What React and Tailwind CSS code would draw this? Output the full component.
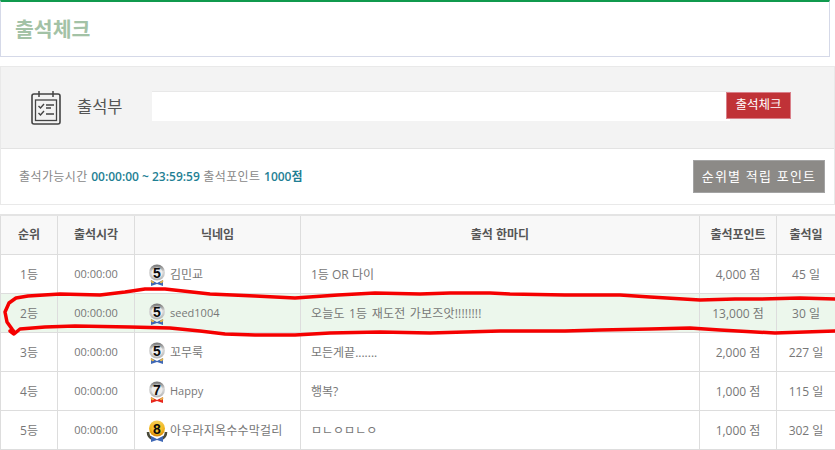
const rows = [
  { r: "1등", t: "00:00:00", lv: 5, kind: "silver", n: "김민교", nc: "text-[12px]", m: "1등 OR 다이", mc: "", p: "4,000 점", d: "45 일" },
  { r: "2등", t: "00:00:00", lv: 5, kind: "silver", n: "seed1004", nc: "text-[11px]", m: "오늘도 1등 재도전 가보즈앗!!!!!!!!", mc: "tracking-[0.2px] [word-spacing:1px]", p: "13,000 점", d: "30 일", hi: true },
  { r: "3등", t: "00:00:00", lv: 5, kind: "silver", n: "꼬무룩", nc: "text-[12px]", m: "모든게끝.......", mc: "", p: "2,000 점", d: "227 일" },
  { r: "4등", t: "00:00:00", lv: 7, kind: "red", n: "Happy", nc: "text-[11px]", m: "행복?", mc: "", p: "1,000 점", d: "115 일" },
  { r: "5등", t: "00:00:00", lv: 8, kind: "gold", n: "아우라지옥수수막걸리", nc: "text-[12px] tracking-[0.2px]", m: "ㅁㄴㅇㅁㄴㅇ", mc: "", p: "1,000 점", d: "302 일" },
];

function Medal({ lv, kind, id }) {
  const gold = kind === "gold";
  const ribbon = kind === "red" ? "#e8261c" : "#3f68b5";
  return (
    <svg width="22" height="24" viewBox="0 0 22 24" className="shrink-0">
      <defs>
        <linearGradient id={id} x1="0" y1="0" x2="0" y2="1">
          <stop offset="0" stopColor={gold ? "#f5cf5c" : "#6f6f6f"} />
          <stop offset="0.45" stopColor={gold ? "#f2b71f" : "#d8d8d8"} />
          <stop offset="1" stopColor={gold ? "#d98c0c" : "#b5b5b5"} />
        </linearGradient>
      </defs>
      {gold && <path d="M2 13c0 4 2 6 5 7M20 13c0 4-2 6-5 7" fill="none" stroke="#4a4a3a" strokeWidth="2.6" />}
      <path d="M5 17l6 3 6-3v6l-6-2-6 2z" fill={ribbon} />
      {!gold && <path d="M5 17.5l1.4 1.8L8 19M17 17.5l-1.4 1.8L14 19" stroke="#e3b54a" strokeWidth="1.6" fill="none" />}
      <circle cx="11" cy="9.5" r="8" fill={`url(#${id})`} />
      <circle cx="11" cy="10" r="5.6" fill={gold ? "#f6c435" : "#f4f4f4"} opacity="0.8" />
      <text x="11" y="14.6" textAnchor="middle" fontSize="14" fontWeight="700" fill="#0a0a0a" fontFamily="'Liberation Sans',sans-serif">{lv}</text>
    </svg>
  );
}

function CheckCal() {
  return (
    <svg width="30" height="35" viewBox="0 0 30 35" fill="none" stroke="#444" className="shrink-0">
      <rect x="1" y="4" width="28" height="30" rx="2" strokeWidth="1.6" />
      <rect x="4.5" y="10" width="21" height="20.5" strokeWidth="1.3" />
      <path d="M8 1v6M22 1v6" strokeWidth="1.5" />
      <path d="M7.5 16l2 2 3.5-4M7.5 23l2 2 3.5-4" strokeWidth="1.4" />
      <path d="M15 15h8M15 18h5M15 24h8" strokeWidth="1.3" />
    </svg>
  );
}

const th = "border border-[#dddddd] font-semibold text-[12px] text-[#555] text-center";
const td = "border border-[#dddddd] text-[12px] text-[#777] pt-[2px]";

export default function App() {
  return (
    <div className="relative w-[835px] h-[450px] overflow-hidden bg-white font-['Open_Sans','Noto_Sans_CJK_KR',sans-serif]">
      <div className="w-[830px] h-[57px] border-x border-b border-[#d5d9e8] border-t-2 border-t-[#109a4e] flex items-center pl-[14px]">
        <h1 className="text-[20.5px] font-bold text-[#a3c2a6] leading-none">출석체크</h1>
      </div>

      <div className="mt-[9px] w-[835px] h-[139px] border border-[#e9e9e9]">
        <div className="h-[82px] bg-[#f3f3f3] border-b border-[#e3e3e3] flex items-center pl-[30px]">
          <CheckCal />
          <span className="ml-[16px] text-[16.5px] text-[#555] w-[74px]">출석부</span>
          <div className="flex items-start mb-[3px] ml-px">
            <div className="w-[578px] h-[30px] bg-white border-t border-[#e8e8e8]" />
            <button className="mt-px -ml-[4px] w-[65px] h-[27px] bg-[#c03237] text-white text-[12.5px] border border-[#d9808a]">출석체크</button>
          </div>
        </div>
        <div className="h-[55px] flex items-center justify-between pl-[18px] pr-[9px]">
          <p className="text-[12px] text-[#888] tracking-[0.4px]">
            출석가능시간 <b className="text-[#1f7f94] font-semibold tracking-normal">00:00:00 ~ 23:59:59</b> 출석포인트 <b className="text-[#1f7f94] font-semibold tracking-normal">1000점</b>
          </p>
          <button className="w-[132px] h-[33px] bg-[#8c8a87] border border-[#a3a3a3] text-white text-[13px] tracking-[1.2px]">순위별 적립 포인트</button>
        </div>
      </div>

      <table className="mt-[9px] w-[835px] table-fixed border-collapse border-t-2 border-t-[#e4e4e4]">
        <colgroup>
          <col className="w-[57px]" />
          <col className="w-[77px]" />
          <col className="w-[166px]" />
          <col className="w-[399px]" />
          <col className="w-[77px]" />
          <col className="w-[59px]" />
        </colgroup>
        <thead>
          <tr className="h-[39px] bg-[#f8f8f8]">
            <th className={th}>순위</th>
            <th className={th}>출석시각</th>
            <th className={th}>닉네임</th>
            <th className={th}>출석 한마디</th>
            <th className={th}>출석포인트</th>
            <th className={th}>출석일</th>
          </tr>
        </thead>
        <tbody>
          {rows.map((row, i) => (
            <tr key={i} className={row.hi ? "h-[39px] bg-[#ecf7ec]" : "h-[39px] bg-white"}>
              <td className={`${td} text-center`}>{row.r}</td>
              <td className="border border-[#dddddd] text-[11px] text-[#777] text-center pt-[2px]">{row.t}</td>
              <td className={td}>
                <div className="flex items-center pl-[11px] gap-[2px] whitespace-nowrap">
                  <Medal lv={row.lv} kind={row.kind} id={`medal-${i}`} />
                  <span className={row.nc}>{row.n}</span>
                </div>
              </td>
              <td className={`${td} pl-[10px]`}><span className={row.mc}>{row.m}</span></td>
              <td className={`${td} text-center`}>{row.p}</td>
              <td className={`${td} text-center`}>{row.d}</td>
            </tr>
          ))}
        </tbody>
      </table>

      <svg width="835" height="450" className="absolute left-0 top-0 pointer-events-none" fill="none">
        <path
          d="M835 299L800 298L760 299L735 299L700 300L650 297L620 295L565 295L510 294L490 293L450 293L420 294L375 293L338 295L295 298L255 296L210 294L165 289L145 289L125 292L100 295L60 294L28 296L16 298L9 303L5 312L7 322L12 329L15 333L10 331L14 334L20 329L45 327L75 326L130 327L170 328L200 331L225 334L255 335L295 335L330 333L380 332L430 333L500 331L565 331L600 330L650 329L690 328L720 330L775 333L835 331"
          stroke="#f50000"
          strokeWidth="3.5"
          strokeLinejoin="round"
          strokeLinecap="round"
        />
      </svg>
    </div>
  );
}
